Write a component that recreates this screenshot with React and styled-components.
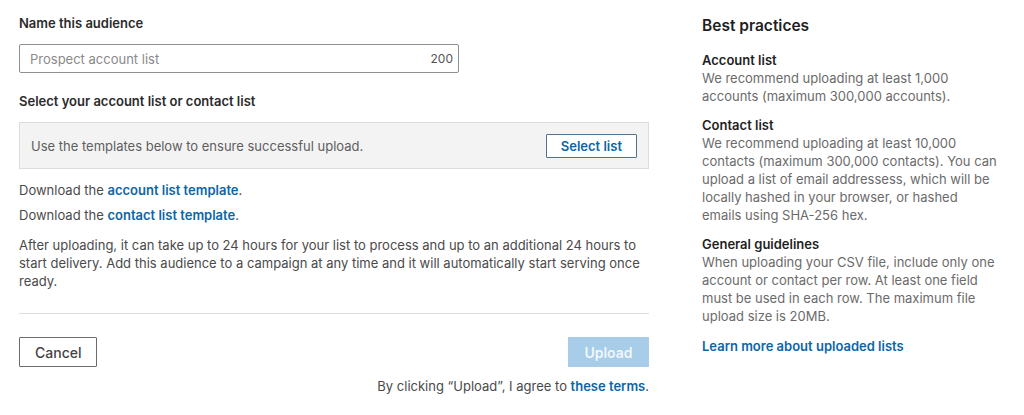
import React from "react";
import styled, { createGlobalStyle } from "styled-components";

const Global = createGlobalStyle`
  html, body { margin: 0; padding: 0; background: #fff; }
  body { font-family: Inter, Roboto, "Noto Sans", "Liberation Sans", sans-serif; -webkit-font-smoothing: antialiased; }
  * { box-sizing: border-box; }
`;

const Page = styled.div`
  display: flex;
  align-items: flex-start;
  gap: 53px;
  padding: 14px 0 0 19px;
  width: 1024px;
  height: 415px;
  overflow: hidden;
`;

const Main = styled.div`
  width: 630px;
  display: flex;
  flex-direction: column;
`;

const Label = styled.div`
  font-size: 13px;
  font-weight: 600;
  line-height: 18px;
  color: #2b2b2b;
  margin-top: ${(p) => p.$mt || 0}px;
`;

const InputWrap = styled.div`
  width: 440px;
  height: 29px;
  margin-top: 12px;
  border: 1px solid #8f8f8f;
  border-radius: 2px;
  display: flex;
  align-items: center;
  padding: 0 5px 0 10px;
`;

const Input = styled.input`
  flex: 1;
  border: none;
  outline: none;
  font: inherit;
  font-size: 13px;
  color: #333;
  padding: 0;
  background: transparent;
  &::placeholder { color: #8a8a8a; }
`;

const Counter = styled.span`
  font-size: 12px;
  color: #555;
`;

const UploadBox = styled.div`
  margin-top: 12px;
  height: 47px;
  background: #f3f3f3;
  border: 1px solid #dcdcdc;
  display: flex;
  align-items: center;
  justify-content: space-between;
  padding: 0 11px 0 11px;
`;

const BoxText = styled.span`
  font-size: 13px;
  color: #5e5e5e;
`;

const OutlineButton = styled.button`
  font: inherit;
  font-size: ${(p) => p.$fs || 13}px;
  font-weight: ${(p) => p.$fw || 600};
  color: ${(p) => p.$color || "#0a66a8"};
  background: #fff;
  border: 1px solid ${(p) => p.$border || "#4f7290"};
  border-radius: 1px;
  height: ${(p) => p.$h || 24}px;
  padding: 0 ${(p) => p.$px || 14}px;
  cursor: pointer;
`;

const Text = styled.p`
  margin: ${(p) => p.$mt || 0}px 0 0;
  font-size: 13px;
  line-height: 18px;
  color: #4a4a4a;
`;

const Link = styled.a`
  color: #0a66a8;
  font-weight: 600;
  text-decoration: none;
`;

const Divider = styled.hr`
  margin: 23px 0 0;
  border: none;
  border-top: 1px solid #dedede;
  height: 0;
`;

const Footer = styled.div`
  margin-top: 23px;
  display: flex;
  justify-content: space-between;
  align-items: flex-start;
`;

const FooterRight = styled.div`
  display: flex;
  flex-direction: column;
  align-items: flex-end;
`;

const PrimaryButton = styled.button`
  font: inherit;
  font-size: 14px;
  font-weight: 600;
  color: rgba(255, 255, 255, 0.85);
  background: #a8cde8;
  border: none;
  height: 30px;
  width: 81px;
  cursor: default;
`;

const Terms = styled.div`
  margin-top: 11px;
  font-size: 13px;
  color: #4a4a4a;
`;

const Side = styled.aside`
  width: 295px;
  display: flex;
  flex-direction: column;
`;

const SideTitle = styled.h2`
  margin: 2px 0 0;
  font-size: 15.5px;
  font-weight: 600;
  line-height: 20px;
  color: #1f1f1f;
`;

const Section = styled.section`
  margin-top: ${(p) => p.$mt || 10}px;
`;

const SectionTitle = styled.h3`
  margin: 0;
  font-size: 13px;
  font-weight: 600;
  line-height: 18px;
  color: #1f1f1f;
`;

const SectionText = styled.p`
  margin: 0;
  font-size: 13px;
  line-height: 18px;
  color: #6b6b6b;
`;

const SideLink = styled.a`
  margin-top: 12px;
  font-size: 13px;
  font-weight: 600;
  line-height: 18px;
  color: #0a66a8;
  text-decoration: none;
`;

export default function App() {
  return (
    <>
      <Global />
      <Page>
        <Main>
          <Label>Name this audience</Label>
          <InputWrap>
            <Input placeholder="Prospect account list" />
            <Counter>200</Counter>
          </InputWrap>
          <Label $mt={19}>Select your account list or contact list</Label>
          <UploadBox>
            <BoxText>Use the templates below to ensure successful upload.</BoxText>
            <OutlineButton $px={14}>Select list</OutlineButton>
          </UploadBox>
          <Text $mt={12}>
            Download the <Link href="#">account list template</Link>.
          </Text>
          <Text $mt={7}>
            Download the <Link href="#">contact list template</Link>.
          </Text>
          <Text $mt={12}>
            After uploading, it can take up to 24 hours for your list to process and up to an additional 24 hours to
            start delivery. Add this audience to a campaign at any time and it will automatically start serving once
            ready.
          </Text>
          <Divider />
          <Footer>
            <OutlineButton $color="#444" $border="#6b6b6b" $h={30} $px={15} $fw={500} $fs={14}>
              Cancel
            </OutlineButton>
            <FooterRight>
              <PrimaryButton disabled>Upload</PrimaryButton>
              <Terms>
                By clicking “Upload”, I agree to <Link href="#">these terms</Link>.
              </Terms>
            </FooterRight>
          </Footer>
        </Main>
        <Side>
          <SideTitle>Best practices</SideTitle>
          <Section $mt={15}>
            <SectionTitle>Account list</SectionTitle>
            <SectionText>We recommend uploading at least 1,000 accounts (maximum 300,000 accounts).</SectionText>
          </Section>
          <Section $mt={11}>
            <SectionTitle>Contact list</SectionTitle>
            <SectionText>
              We recommend uploading at least 10,000 contacts (maximum 300,000 contacts). You can upload a list of
              email addressess, which will be locally hashed in your browser, or hashed emails using SHA-256 hex.
            </SectionText>
          </Section>
          <Section $mt={11}>
            <SectionTitle>General guidelines</SectionTitle>
            <SectionText>
              When uploading your CSV file, include only one account or contact per row. At least one field must be
              used in each row. The maximum file upload size is 20MB.
            </SectionText>
          </Section>
          <SideLink href="#">Learn more about uploaded lists</SideLink>
        </Side>
      </Page>
    </>
  );
}
